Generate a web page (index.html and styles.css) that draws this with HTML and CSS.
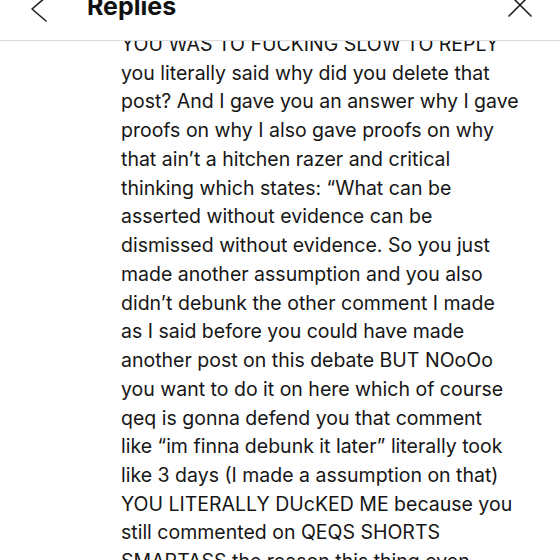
FILE: index.html
```html
<!DOCTYPE html>
<html>
<head>
<meta charset="utf-8">
<link rel="stylesheet" href="styles.css">
</head>
<body>
<div class="screen">
  <header class="topbar">
    <svg class="back" width="20" height="24" viewBox="0 0 20 24"><path d="M16 -2 L2 10 L16 22" fill="none" stroke="#1f1f1f" stroke-width="1.6" stroke-linecap="round" stroke-linejoin="round"/></svg>
    <h1 class="title">Replies</h1>
    <svg class="close" width="26" height="26" viewBox="0 0 26 26"><path d="M2 2 L24 24 M24 2 L2 24" fill="none" stroke="#1f1f1f" stroke-width="1.6" stroke-linecap="round"/></svg>
  </header>
  <main class="content">
    <p class="reply">
      <span class="ln">YOU WAS TO FUCKING SLOW TO REPLY</span>
      <span class="ln">you literally said why did you delete that</span>
      <span class="ln">post? And I gave you an answer why I gave</span>
      <span class="ln">proofs on why I also gave proofs on why</span>
      <span class="ln">that ain’t a hitchen razer and critical</span>
      <span class="ln">thinking which states: “What can be</span>
      <span class="ln">asserted without evidence can be</span>
      <span class="ln">dismissed without evidence. So you just</span>
      <span class="ln">made another assumption and you also</span>
      <span class="ln">didn’t debunk the other comment I made</span>
      <span class="ln">as I said before you could have made</span>
      <span class="ln">another post on this debate BUT NOoOo</span>
      <span class="ln">you want to do it on here which of course</span>
      <span class="ln">qeq is gonna defend you that comment</span>
      <span class="ln">like “im finna debunk it later” literally took</span>
      <span class="ln">like 3 days (I made a assumption on that)</span>
      <span class="ln">YOU LITERALLY DUcKED ME because you</span>
      <span class="ln">still commented on QEQS SHORTS</span>
      <span class="ln">SMARTASS the reason this thing even</span>
    </p>
  </main>
</div>
</body>
</html>
```
FILE: styles.css
```css
html, body {
  margin: 0;
  padding: 0;
  background: #ffffff;
}
.screen {
  width: 560px;
  height: 560px;
  overflow: hidden;
  display: flex;
  flex-direction: column;
  font-family: "Inter", "Liberation Sans", sans-serif;
  color: #161616;
}
.topbar {
  height: 40px;
  flex: 0 0 40px;
  border-bottom: 1px solid #dcdcdc;
  box-shadow: 0 1px 2px rgba(0,0,0,0.04);
  display: flex;
  align-items: flex-start;
  overflow: hidden;
  position: relative;
  z-index: 1;
  background: #fff;
}
.back {
  margin-left: 30px;
  margin-top: -1px;
  flex: none;
}
.title {
  margin: -9px 0 0 37px;
  font-size: 25px;
  font-weight: 700;
  line-height: 30px;
  letter-spacing: 0;
  color: #111;
}
.close {
  margin-left: auto;
  margin-right: 27px;
  margin-top: -8px;
  flex: none;
}
.content {
  flex: 1;
  overflow: hidden;
}
.reply {
  margin: -11px 0 0 121px;
  font-size: 19.5px;
  line-height: 28.73px;
  white-space: nowrap;
}
.ln {
  display: block;
}
```
